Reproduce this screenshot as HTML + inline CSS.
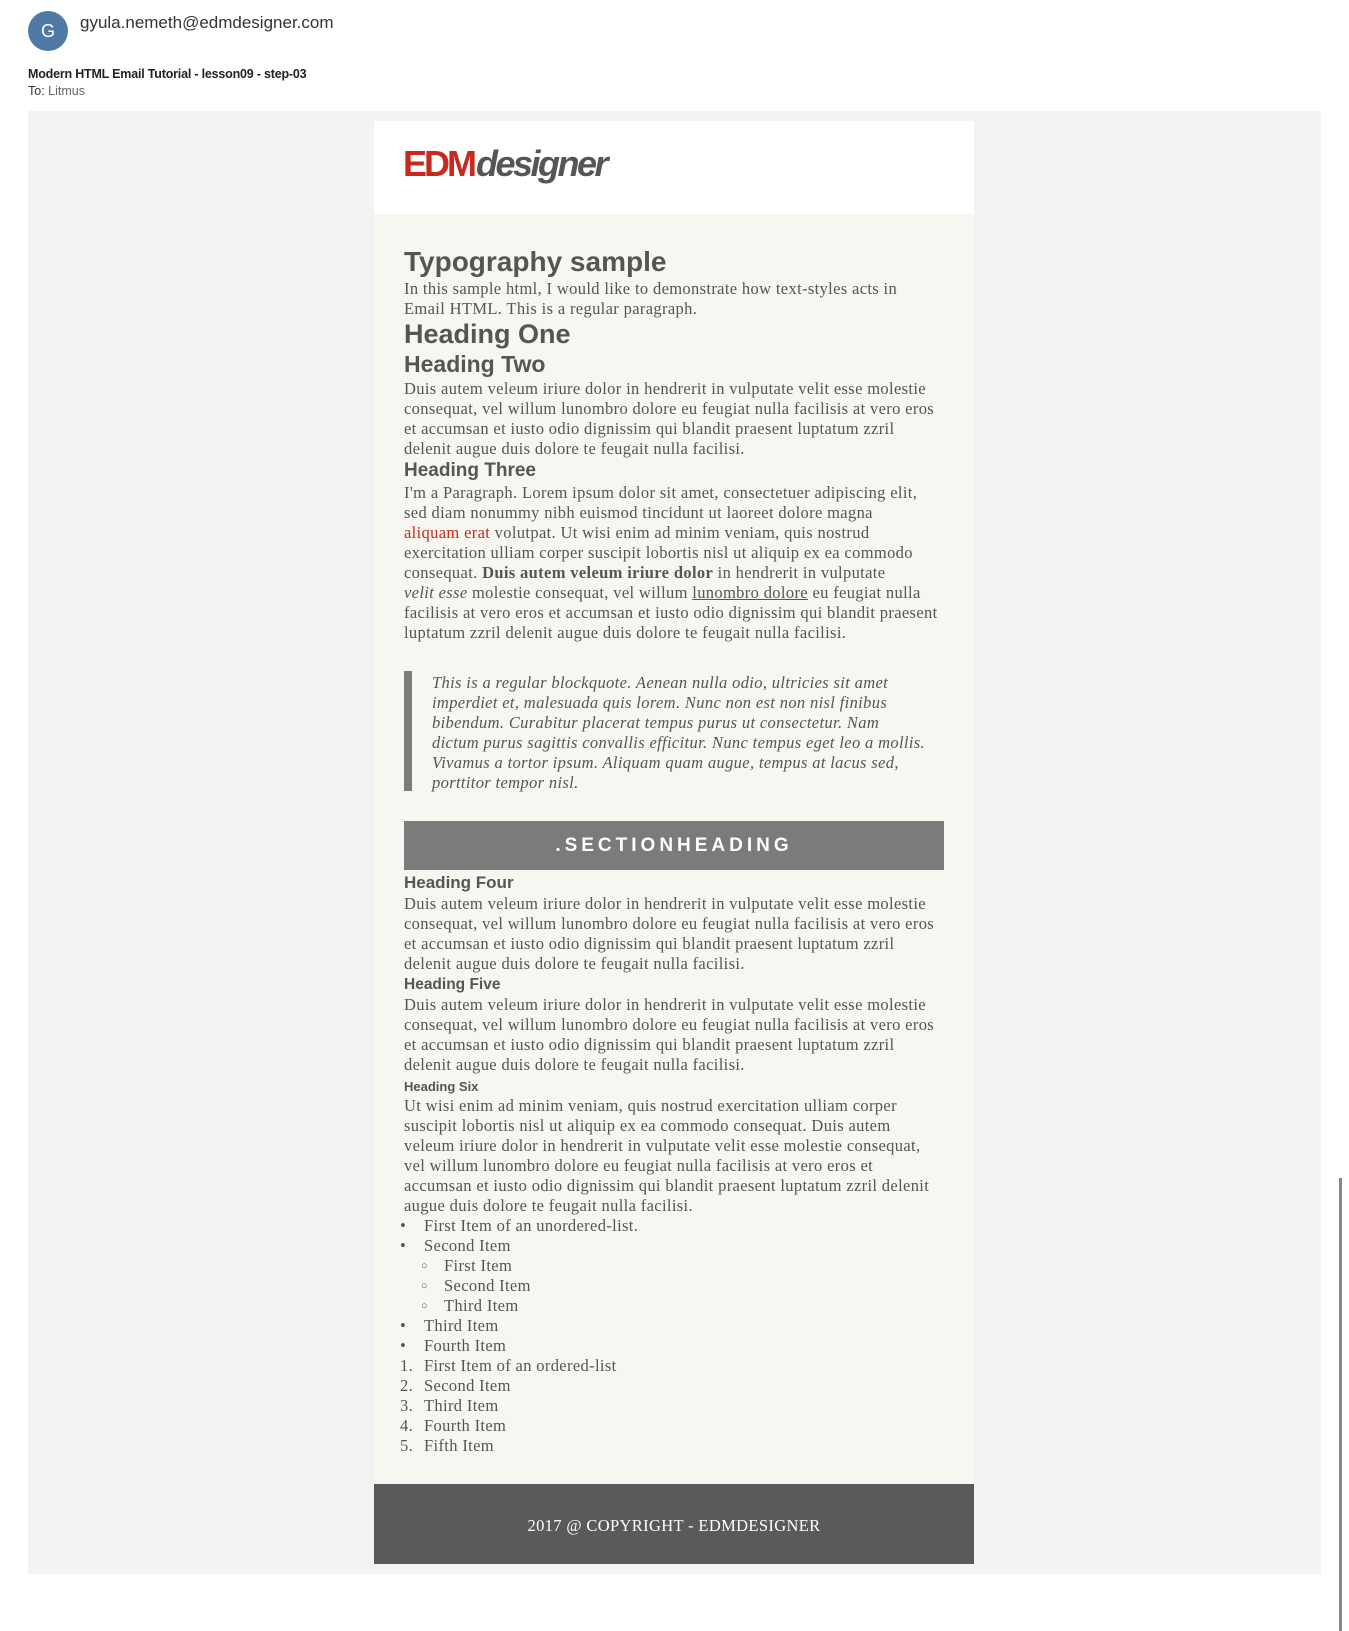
<!DOCTYPE html>
<html><head><meta charset="utf-8"><style>
*{margin:0;padding:0;box-sizing:border-box}
body{width:1349px;height:1631px;background:#fff;position:relative;overflow:hidden;font-family:"Liberation Sans",sans-serif;color:#555}
.a{position:absolute}
.s{font-family:"Liberation Serif",serif;font-size:16.5px;line-height:20px;white-space:nowrap;color:#555;letter-spacing:0.35px}
.h{font-family:"Liberation Sans",sans-serif;font-weight:bold;color:#555;white-space:nowrap}
.li{position:absolute;font-family:"Liberation Serif",serif;font-size:16.5px;line-height:20px;white-space:nowrap;color:#555;letter-spacing:0.35px}
</style></head><body>
<div class="a" style="left:28px;top:11px;width:40px;height:40px;border-radius:50%;background:#4f7aa6;color:#fff;font-size:18px;line-height:40px;text-align:center">G</div>
<div class="a" style="left:80px;top:13px;font-size:17px;color:#333">gyula.nemeth@edmdesigner.com</div>
<div class="a" style="left:28px;top:67px;font-size:12.5px;color:#222;font-weight:bold;letter-spacing:-0.2px">Modern HTML Email Tutorial - lesson09 - step-03</div>
<div class="a" style="left:28px;top:84px;font-size:12.5px;color:#333">To: <span style="color:#666">Litmus</span></div>
<div class="a" style="left:28px;top:111px;width:1293px;height:1463px;background:#f3f3f3"></div>
<div class="a" style="left:1339px;top:1178px;width:3px;height:453px;background:#888"></div>
<div class="a" style="left:374px;top:121px;width:600px;height:93px;background:#fff"></div>
<div class="a" style="left:403px;top:142px;font-size:36px;line-height:44px;white-space:nowrap;letter-spacing:-2px"><span style="color:#c8281e;font-weight:bold;letter-spacing:-3px">EDM</span><span style="color:#555;font-weight:bold;font-style:italic;margin-left:2px;letter-spacing:-2.5px">designer</span></div>
<div class="a" style="left:374px;top:214px;width:600px;height:1270px;background:#f7f6f0"></div>
<div class="a" style="left:374px;top:1484px;width:600px;height:80px;background:#5a5a5c"></div>
<div class="a s" style="left:374px;width:600px;top:1516px;text-align:center;color:#fff">2017 @ COPYRIGHT - EDMDESIGNER</div>

<div class="a h" style="left:404px;top:245px;font-size:28px;line-height:34px">Typography sample</div>
<div class="a s" style="left:404px;top:279px">In this sample html, I would like to demonstrate how text-styles acts in<br>Email HTML. This is a regular paragraph.</div>
<div class="a h" style="left:404px;top:318px;font-size:27px;line-height:32px">Heading One</div>
<div class="a h" style="left:404px;top:350px;font-size:23px;line-height:28px">Heading Two</div>
<div class="a s" style="left:404px;top:379px">Duis autem veleum iriure dolor in hendrerit in vulputate velit esse molestie<br>consequat, vel willum lunombro dolore eu feugiat nulla facilisis at vero eros<br>et accumsan et iusto odio dignissim qui blandit praesent luptatum zzril<br>delenit augue duis dolore te feugait nulla facilisi.</div>
<div class="a h" style="left:404px;top:460px;font-size:19px;line-height:22px">Heading Three</div>
<div class="a s" style="left:404px;top:483px">I'm a Paragraph. Lorem ipsum dolor sit amet, consectetuer adipiscing elit,<br>sed diam nonummy nibh euismod tincidunt ut laoreet dolore magna<br><span style="color:#c8281e">aliquam erat</span> volutpat. Ut wisi enim ad minim veniam, quis nostrud<br>exercitation ulliam corper suscipit lobortis nisl ut aliquip ex ea commodo<br>consequat. <b>Duis autem veleum iriure dolor</b> in hendrerit in vulputate<br><i>velit esse</i> molestie consequat, vel willum <u>lunombro dolore</u> eu feugiat nulla<br>facilisis at vero eros et accumsan et iusto odio dignissim qui blandit praesent<br>luptatum zzril delenit augue duis dolore te feugait nulla facilisi.</div>
<div class="a" style="left:404px;top:671px;width:8px;height:120px;background:#7b7b7b"></div>
<div class="a s" style="left:432px;top:673px;font-style:italic">This is a regular blockquote. Aenean nulla odio, ultricies sit amet<br>imperdiet et, malesuada quis lorem. Nunc non est non nisl finibus<br>bibendum. Curabitur placerat tempus purus ut consectetur. Nam<br>dictum purus sagittis convallis efficitur. Nunc tempus eget leo a mollis.<br>Vivamus a tortor ipsum. Aliquam quam augue, tempus at lacus sed,<br>porttitor tempor nisl.</div>
<div class="a" style="left:404px;top:821px;width:540px;height:49px;background:#7b7b7b;color:#fff;font-weight:bold;font-size:19px;line-height:49px;text-align:center;letter-spacing:4px">.SECTIONHEADING</div>
<div class="a h" style="left:404px;top:873px;font-size:17px;line-height:20px">Heading Four</div>
<div class="a s" style="left:404px;top:894px">Duis autem veleum iriure dolor in hendrerit in vulputate velit esse molestie<br>consequat, vel willum lunombro dolore eu feugiat nulla facilisis at vero eros<br>et accumsan et iusto odio dignissim qui blandit praesent luptatum zzril<br>delenit augue duis dolore te feugait nulla facilisi.</div>
<div class="a h" style="left:404px;top:976px;font-size:15.5px;line-height:18px">Heading Five</div>
<div class="a s" style="left:404px;top:995px">Duis autem veleum iriure dolor in hendrerit in vulputate velit esse molestie<br>consequat, vel willum lunombro dolore eu feugiat nulla facilisis at vero eros<br>et accumsan et iusto odio dignissim qui blandit praesent luptatum zzril<br>delenit augue duis dolore te feugait nulla facilisi.</div>
<div class="a h" style="left:404px;top:1079px;font-size:13px;line-height:16px">Heading Six</div>
<div class="a s" style="left:404px;top:1096px">Ut wisi enim ad minim veniam, quis nostrud exercitation ulliam corper<br>suscipit lobortis nisl ut aliquip ex ea commodo consequat. Duis autem<br>veleum iriure dolor in hendrerit in vulputate velit esse molestie consequat,<br>vel willum lunombro dolore eu feugiat nulla facilisis at vero eros et<br>accumsan et iusto odio dignissim qui blandit praesent luptatum zzril delenit<br>augue duis dolore te feugait nulla facilisi.</div>

<div class="li" style="left:400px;top:1216px">•</div><div class="li" style="left:424px;top:1216px">First Item of an unordered-list.</div>
<div class="li" style="left:400px;top:1236px">•</div><div class="li" style="left:424px;top:1236px">Second Item</div>
<div class="li" style="left:421px;top:1256px;font-size:11px">○</div><div class="li" style="left:444px;top:1256px">First Item</div>
<div class="li" style="left:421px;top:1276px;font-size:11px">○</div><div class="li" style="left:444px;top:1276px">Second Item</div>
<div class="li" style="left:421px;top:1296px;font-size:11px">○</div><div class="li" style="left:444px;top:1296px">Third Item</div>
<div class="li" style="left:400px;top:1316px">•</div><div class="li" style="left:424px;top:1316px">Third Item</div>
<div class="li" style="left:400px;top:1336px">•</div><div class="li" style="left:424px;top:1336px">Fourth Item</div>
<div class="li" style="left:400px;top:1356px">1.</div><div class="li" style="left:424px;top:1356px">First Item of an ordered-list</div>
<div class="li" style="left:400px;top:1376px">2.</div><div class="li" style="left:424px;top:1376px">Second Item</div>
<div class="li" style="left:400px;top:1396px">3.</div><div class="li" style="left:424px;top:1396px">Third Item</div>
<div class="li" style="left:400px;top:1416px">4.</div><div class="li" style="left:424px;top:1416px">Fourth Item</div>
<div class="li" style="left:400px;top:1436px">5.</div><div class="li" style="left:424px;top:1436px">Fifth Item</div>
</body></html>
